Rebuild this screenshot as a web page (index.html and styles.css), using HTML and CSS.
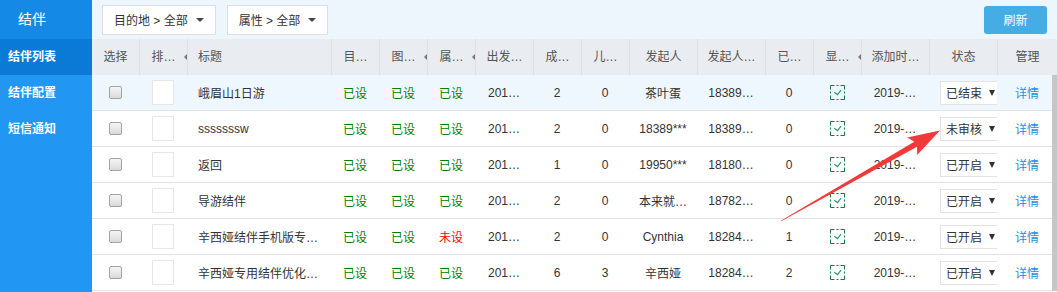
FILE: index.html
```html
<!DOCTYPE html>
<html lang="zh">
<head>
  <meta charset="UTF-8" />
  <title>结伴列表</title>
  <link rel="stylesheet" href="styles.css">
</head>
<body>
  <div class="app">
    <aside class="sidebar">
      <h1>结伴</h1>
      <nav>
        <a class="active" href="#">结伴列表</a>
        <a href="#">结伴配置</a>
        <a href="#">短信通知</a>
      </nav>
    </aside>

    <main class="main">
      <!-- 筛选 + 刷新 -->
      <div class="toolbar">
        <div class="filter">目的地 &gt; 全部<i class="caret"></i></div>
        <div class="filter">属性 &gt; 全部<i class="caret"></i></div>
        <button class="refresh">刷新</button>
      </div>

      <div class="list">
        <div class="row head">
          <div class="cell">选择</div>
          <div class="cell sort">排…</div>
          <div class="cell left">标题</div>
          <div class="cell">目…</div>
          <div class="cell sort">图…</div>
          <div class="cell sort">属…</div>
          <div class="cell">出发…</div>
          <div class="cell">成…</div>
          <div class="cell">儿…</div>
          <div class="cell">发起人</div>
          <div class="cell">发起人…</div>
          <div class="cell">已…</div>
          <div class="cell sort">显…</div>
          <div class="cell">添加时…</div>
          <div class="cell">状态</div>
          <div class="cell">管理</div>
        </div>

        <div class="rows">
          <div class="row hover">
            <div class="cell"><input type="checkbox" class="check"></div>
            <div class="cell"><input type="text" class="order"></div>
            <div class="cell left">峨眉山1日游</div>
            <div class="cell ok">已设</div>
            <div class="cell ok">已设</div>
            <div class="cell ok">已设</div>
            <div class="cell">201…</div>
            <div class="cell">2</div>
            <div class="cell">0</div>
            <div class="cell">茶叶蛋</div>
            <div class="cell">18389…</div>
            <div class="cell">0</div>
            <div class="cell"><svg class="shown" viewBox="0 0 15 15"><path class="dash" d="M0.5 0.5H14.5M14.5 0.5V14.5M14.5 14.5H0.5M0.5 14.5V0.5"/><path class="tick" d="M4.3 7.3L7.5 9.6L11 5.2"/></svg></div>
            <div class="cell">2019-…</div>
            <div class="cell left"><span class="status">已结束<i class="tri"></i></span></div>
            <div class="cell"><a class="more" href="#">详情</a></div>
          </div>

          <div class="row">
            <div class="cell"><input type="checkbox" class="check"></div>
            <div class="cell"><input type="text" class="order"></div>
            <div class="cell left">sssssssw</div>
            <div class="cell ok">已设</div>
            <div class="cell ok">已设</div>
            <div class="cell ok">已设</div>
            <div class="cell">201…</div>
            <div class="cell">2</div>
            <div class="cell">0</div>
            <div class="cell">18389***</div>
            <div class="cell">18389…</div>
            <div class="cell">0</div>
            <div class="cell"><svg class="shown" viewBox="0 0 15 15"><path class="dash" d="M0.5 0.5H14.5M14.5 0.5V14.5M14.5 14.5H0.5M0.5 14.5V0.5"/><path class="tick" d="M4.3 7.3L7.5 9.6L11 5.2"/></svg></div>
            <div class="cell">2019-…</div>
            <div class="cell left"><span class="status">未审核<i class="tri"></i></span></div>
            <div class="cell"><a class="more" href="#">详情</a></div>
          </div>

          <div class="row">
            <div class="cell"><input type="checkbox" class="check"></div>
            <div class="cell"><input type="text" class="order"></div>
            <div class="cell left">返回</div>
            <div class="cell ok">已设</div>
            <div class="cell ok">已设</div>
            <div class="cell ok">已设</div>
            <div class="cell">201…</div>
            <div class="cell">1</div>
            <div class="cell">0</div>
            <div class="cell">19950***</div>
            <div class="cell">18180…</div>
            <div class="cell">0</div>
            <div class="cell"><svg class="shown" viewBox="0 0 15 15"><path class="dash" d="M0.5 0.5H14.5M14.5 0.5V14.5M14.5 14.5H0.5M0.5 14.5V0.5"/><path class="tick" d="M4.3 7.3L7.5 9.6L11 5.2"/></svg></div>
            <div class="cell">2019-…</div>
            <div class="cell left"><span class="status">已开启<i class="tri"></i></span></div>
            <div class="cell"><a class="more" href="#">详情</a></div>
          </div>

          <div class="row">
            <div class="cell"><input type="checkbox" class="check"></div>
            <div class="cell"><input type="text" class="order"></div>
            <div class="cell left">导游结伴</div>
            <div class="cell ok">已设</div>
            <div class="cell ok">已设</div>
            <div class="cell ok">已设</div>
            <div class="cell">201…</div>
            <div class="cell">2</div>
            <div class="cell">0</div>
            <div class="cell">本来就…</div>
            <div class="cell">18782…</div>
            <div class="cell">0</div>
            <div class="cell"><svg class="shown" viewBox="0 0 15 15"><path class="dash" d="M0.5 0.5H14.5M14.5 0.5V14.5M14.5 14.5H0.5M0.5 14.5V0.5"/><path class="tick" d="M4.3 7.3L7.5 9.6L11 5.2"/></svg></div>
            <div class="cell">2019-…</div>
            <div class="cell left"><span class="status">已开启<i class="tri"></i></span></div>
            <div class="cell"><a class="more" href="#">详情</a></div>
          </div>

          <div class="row">
            <div class="cell"><input type="checkbox" class="check"></div>
            <div class="cell"><input type="text" class="order"></div>
            <div class="cell left">辛西娅结伴手机版专…</div>
            <div class="cell ok">已设</div>
            <div class="cell ok">已设</div>
            <div class="cell no">未设</div>
            <div class="cell">201…</div>
            <div class="cell">2</div>
            <div class="cell">0</div>
            <div class="cell">Cynthia</div>
            <div class="cell">18284…</div>
            <div class="cell">1</div>
            <div class="cell"><svg class="shown" viewBox="0 0 15 15"><path class="dash" d="M0.5 0.5H14.5M14.5 0.5V14.5M14.5 14.5H0.5M0.5 14.5V0.5"/><path class="tick" d="M4.3 7.3L7.5 9.6L11 5.2"/></svg></div>
            <div class="cell">2019-…</div>
            <div class="cell left"><span class="status">已开启<i class="tri"></i></span></div>
            <div class="cell"><a class="more" href="#">详情</a></div>
          </div>

          <div class="row">
            <div class="cell"><input type="checkbox" class="check"></div>
            <div class="cell"><input type="text" class="order"></div>
            <div class="cell left">辛西娅专用结伴优化…</div>
            <div class="cell ok">已设</div>
            <div class="cell ok">已设</div>
            <div class="cell ok">已设</div>
            <div class="cell">201…</div>
            <div class="cell">6</div>
            <div class="cell">3</div>
            <div class="cell">辛西娅</div>
            <div class="cell">18284…</div>
            <div class="cell">2</div>
            <div class="cell"><svg class="shown" viewBox="0 0 15 15"><path class="dash" d="M0.5 0.5H14.5M14.5 0.5V14.5M14.5 14.5H0.5M0.5 14.5V0.5"/><path class="tick" d="M4.3 7.3L7.5 9.6L11 5.2"/></svg></div>
            <div class="cell">2019-…</div>
            <div class="cell left"><span class="status">已开启<i class="tri"></i></span></div>
            <div class="cell"><a class="more" href="#">详情</a></div>
          </div>

          <div class="scrollbar"></div>
        </div>
      </div>
    </main>
  </div>

  <!-- 标注箭头 -->
  <svg class="arrow" width="1057" height="292">
    <g transform="translate(781 221) rotate(-29.67)">
      <polygon points="0,-0.3 155,-2.8 151,-10 183,0 151,10 155,2.8 0,0.3" />
    </g>
  </svg>
</body>
</html>
```

FILE: styles.css
```css
/* colores */
:root {
  --side-bg: #2196f3;
  --side-head: #1589e6;
  --side-active: #0a7ad6;
  --top-bg: #eef6fd;
  --head-bg: #e9ecf0;
  --line: #e3e3e3;
  --text: #333333;
  --link: #1b8fe2;
  --cols: 47px 48px 144px 48px 48px 48px 58px 48px 48px 68px 68px 48px 48px 68px 68px 60px;
}
* { box-sizing: border-box; margin: 0; padding: 0; }
body {
  font-family: "Liberation Sans", "Noto Sans CJK SC", sans-serif;
  font-size: 12px;
  color: var(--text);
  background: #fff;
  width: 1057px;
  height: 292px;
  overflow: hidden;
  position: relative;
}
.app {
  display: flex;
  height: 292px;
}

/* SIDEBAR */
.sidebar {
  width: 92px;
  flex-shrink: 0;
  background: var(--side-bg);
  color: #fff;
}
.sidebar h1 {
  height: 39px;
  line-height: 39px;
  padding-left: 18px;
  font-size: 14px;
  font-weight: normal;
  background: var(--side-head);
}
.sidebar a {
  display: block;
  height: 36px;
  line-height: 36px;
  padding-left: 8px;
  color: #fff;
  font-weight: bold;
  text-decoration: none;
}
.sidebar a.active {
  background: var(--side-active);
}

/* MAIN */
.main {
  flex: 1;
  min-width: 0;
  display: flex;
  flex-direction: column;
}
.toolbar {
  height: 39px;
  background: var(--top-bg);
  display: flex;
  align-items: center;
  gap: 11px;
  padding: 0 10px;
}
.filter {
  height: 30px;
  display: flex;
  align-items: center;
  gap: 8px;
  padding: 0 11px;
  background: #fff;
  border: 1px solid #dcdfe3;
  white-space: nowrap;
}
.caret {
  width: 0;
  height: 0;
  border-left: 4px solid transparent;
  border-right: 4px solid transparent;
  border-top: 4px solid #444;
}
.refresh {
  margin-left: auto;
  width: 63px;
  height: 28px;
  border: none;
  border-radius: 3px;
  background: #45ade5;
  color: #fff;
  font-family: inherit;
  font-size: 12px;
}

/* LISTA */
.row {
  display: grid;
  grid-template-columns: var(--cols);
  height: 36px;
  align-items: center;
  border-bottom: 1px solid var(--line);
}
.cell {
  text-align: center;
  white-space: nowrap;
  overflow: hidden;
}
.cell.left {
  text-align: left;
  padding-left: 11px;
}
.row.head {
  background: var(--head-bg);
  color: #555;
  border-bottom: none;
}
.row.head .cell {
  height: 100%;
  line-height: 36px;
  border-left: 1px solid #dcdfe4;
  position: relative;
}
.row.head .cell:first-child { border-left: none; }
.row.head .cell.left { padding-left: 10px; }
/* icono de orden, cortado por el borde */
.row.head .sort::after {
  content: "";
  position: absolute;
  right: 0;
  top: 15px;
  border-top: 3px solid transparent;
  border-bottom: 3px solid transparent;
  border-right: 3px solid #777;
}
.rows { position: relative; }
.row.hover { background: #eff7fe; }

.check {
  appearance: none;
  display: block;
  margin: 0 auto;
  width: 13px;
  height: 13px;
  border: 1px solid #a4a4a4;
  border-radius: 2px;
  background: linear-gradient(#f5f5f5, #dadada);
}
.order {
  display: block;
  margin: 0 auto;
  width: 22px;
  height: 25px;
  border: 1px solid #e6e6e6;
  background: #fff;
}
.ok { color: #008000; }
.no { color: #ff0000; }

.shown {
  display: block;
  margin: 0 auto;
  width: 15px;
  height: 15px;
}
.shown .dash {
  fill: none;
  stroke: #1d7a3e;
  stroke-dasharray: 4 2 2 2 4;
}
.shown .tick {
  fill: none;
  stroke: #2e9c62;
  stroke-width: 1.2;
}

.status {
  display: inline-flex;
  align-items: center;
  gap: 7px;
  width: 62px;
  height: 24px;
  padding-left: 5px;
  border: 1px solid #e3e3e3;
  background: #fff;
  vertical-align: middle;
}
.tri {
  width: 0;
  height: 0;
  border-left: 3px solid transparent;
  border-right: 3px solid transparent;
  border-top: 6px solid #333;
}
.more {
  color: var(--link);
  text-decoration: none;
}

.scrollbar {
  position: absolute;
  top: 0;
  right: 0;
  width: 5px;
  height: 100%;
  background: #c6c6c6;
}

/* flecha de anotación */
.arrow {
  position: absolute;
  top: 0;
  left: 0;
  pointer-events: none;
}
.arrow polygon { fill: #f03a3a; }
```
